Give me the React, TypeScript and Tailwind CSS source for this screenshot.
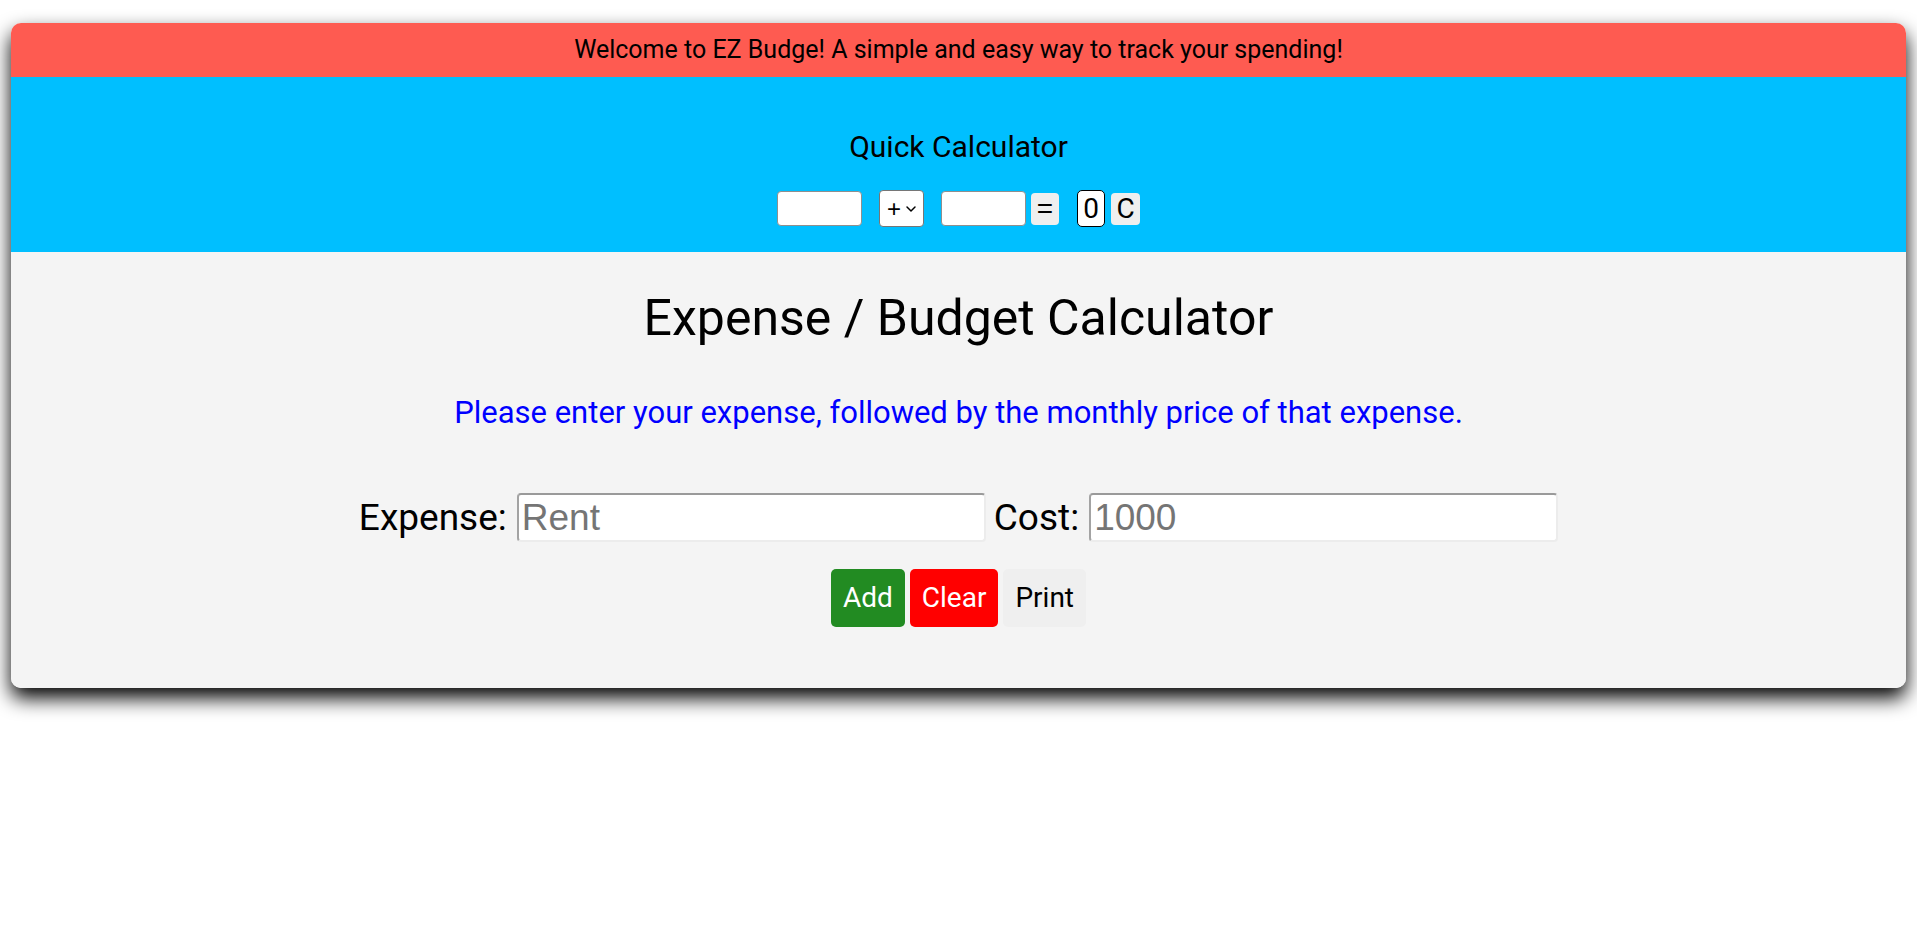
import { ChevronDown } from "lucide-react";

function QuickCalculator() {
  return (
    <section className="flex h-[175px] flex-col items-center bg-[#00bfff] pt-[52px]">
      <h2 className="text-[30px] leading-[35px]">Quick Calculator</h2>
      <div className="mt-[26px] flex h-[37px] items-center font-['Liberation_Sans',Arial,sans-serif]">
        <input
          type="number"
          className="h-[35px] w-[85px] rounded-[4px] border border-[#8f8f8f] bg-white px-1 text-[20px] outline-none"
        />
        <div className="ml-[17px] flex h-[37px] w-[45px] items-center justify-between rounded-[4px] border border-[#767676] bg-white pl-[7px] pr-[4px] text-[24px] leading-none">
          <span>+</span>
          <ChevronDown className="h-[16px] w-[16px]" strokeWidth={2.2} />
        </div>
        <input
          type="number"
          className="ml-[17px] h-[35px] w-[85px] rounded-[4px] border border-[#8f8f8f] bg-white px-1 text-[20px] outline-none"
        />
        <button className="ml-[5px] flex h-[32px] w-[28px] items-center justify-center rounded-[4px] bg-[#efefef] text-[28px] leading-[32px]">
          =
        </button>
        <output className="ml-[18px] flex h-[37px] w-[28px] items-center justify-center rounded-[5px] border border-black bg-white font-['Roboto',sans-serif] text-[28px] leading-[32px]">
          0
        </output>
        <button className="ml-[6px] flex h-[32px] w-[29px] items-center justify-center rounded-[4px] bg-[#efefef] font-['Roboto',sans-serif] text-[28px] leading-[32px]">
          C
        </button>
      </div>
    </section>
  );
}

function ExpenseForm() {
  return (
    <section className="flex flex-col items-center bg-[#f4f4f4] pb-[61px] pt-[37px]">
      <h1 className="text-[50px] leading-[59px]">Expense / Budget Calculator</h1>
      <p className="mt-[46px] text-[31px] leading-[37px] text-[#0000ff]">
        Please enter your expense, followed by the monthly price of that expense.
      </p>

      <div className="mt-[62px] flex h-[49px] items-center text-[37px] leading-[43px]">
        <label htmlFor="expense">Expense:</label>
        <input
          id="expense"
          type="text"
          placeholder="Rent"
          className="ml-[10px] h-[49px] w-[469px] rounded-[4px] border-2 border-t-[#9a9a9a] border-l-[#a3a3a3] border-r-[#ececec] border-b-[#ececec] bg-white pl-[3px] font-['Liberation_Sans',Arial,sans-serif] text-[37px] outline-none placeholder:text-[#757575]"
        />
        <label htmlFor="cost" className="ml-[8px]">
          Cost:
        </label>
        <input
          id="cost"
          type="number"
          placeholder="1000"
          className="ml-[10px] h-[49px] w-[469px] rounded-[4px] border-2 border-t-[#9a9a9a] border-l-[#a3a3a3] border-r-[#ececec] border-b-[#ececec] bg-white pl-[3px] font-['Liberation_Sans',Arial,sans-serif] text-[37px] outline-none placeholder:text-[#757575]"
        />
      </div>

      <div className="mt-[27px] flex gap-[5px] text-[28px] leading-[34px]">
        <button className="rounded-[5px] bg-[#228b22] px-[12px] py-[12px] text-white">Add</button>
        <button className="rounded-[5px] bg-[#ff0000] px-[12px] py-[12px] text-white">Clear</button>
        <button className="rounded-[5px] bg-[#efefef] px-[12px] py-[12px] text-black">Print</button>
      </div>
    </section>
  );
}

export default function App() {
  return (
    <main className="min-h-screen bg-white pt-[23px] font-['Roboto','Liberation_Sans',sans-serif] text-black">
      <div className="mx-[11px] overflow-hidden rounded-[10px] shadow-[0_10px_20px_#000]">
        {/* Welcome banner */}
        <header className="flex h-[54px] items-center justify-center bg-[#fe5b51] text-[25px]">
          Welcome to EZ Budge! A simple and easy way to track your spending!
        </header>

        <QuickCalculator />
        <ExpenseForm />
      </div>
    </main>
  );
}
